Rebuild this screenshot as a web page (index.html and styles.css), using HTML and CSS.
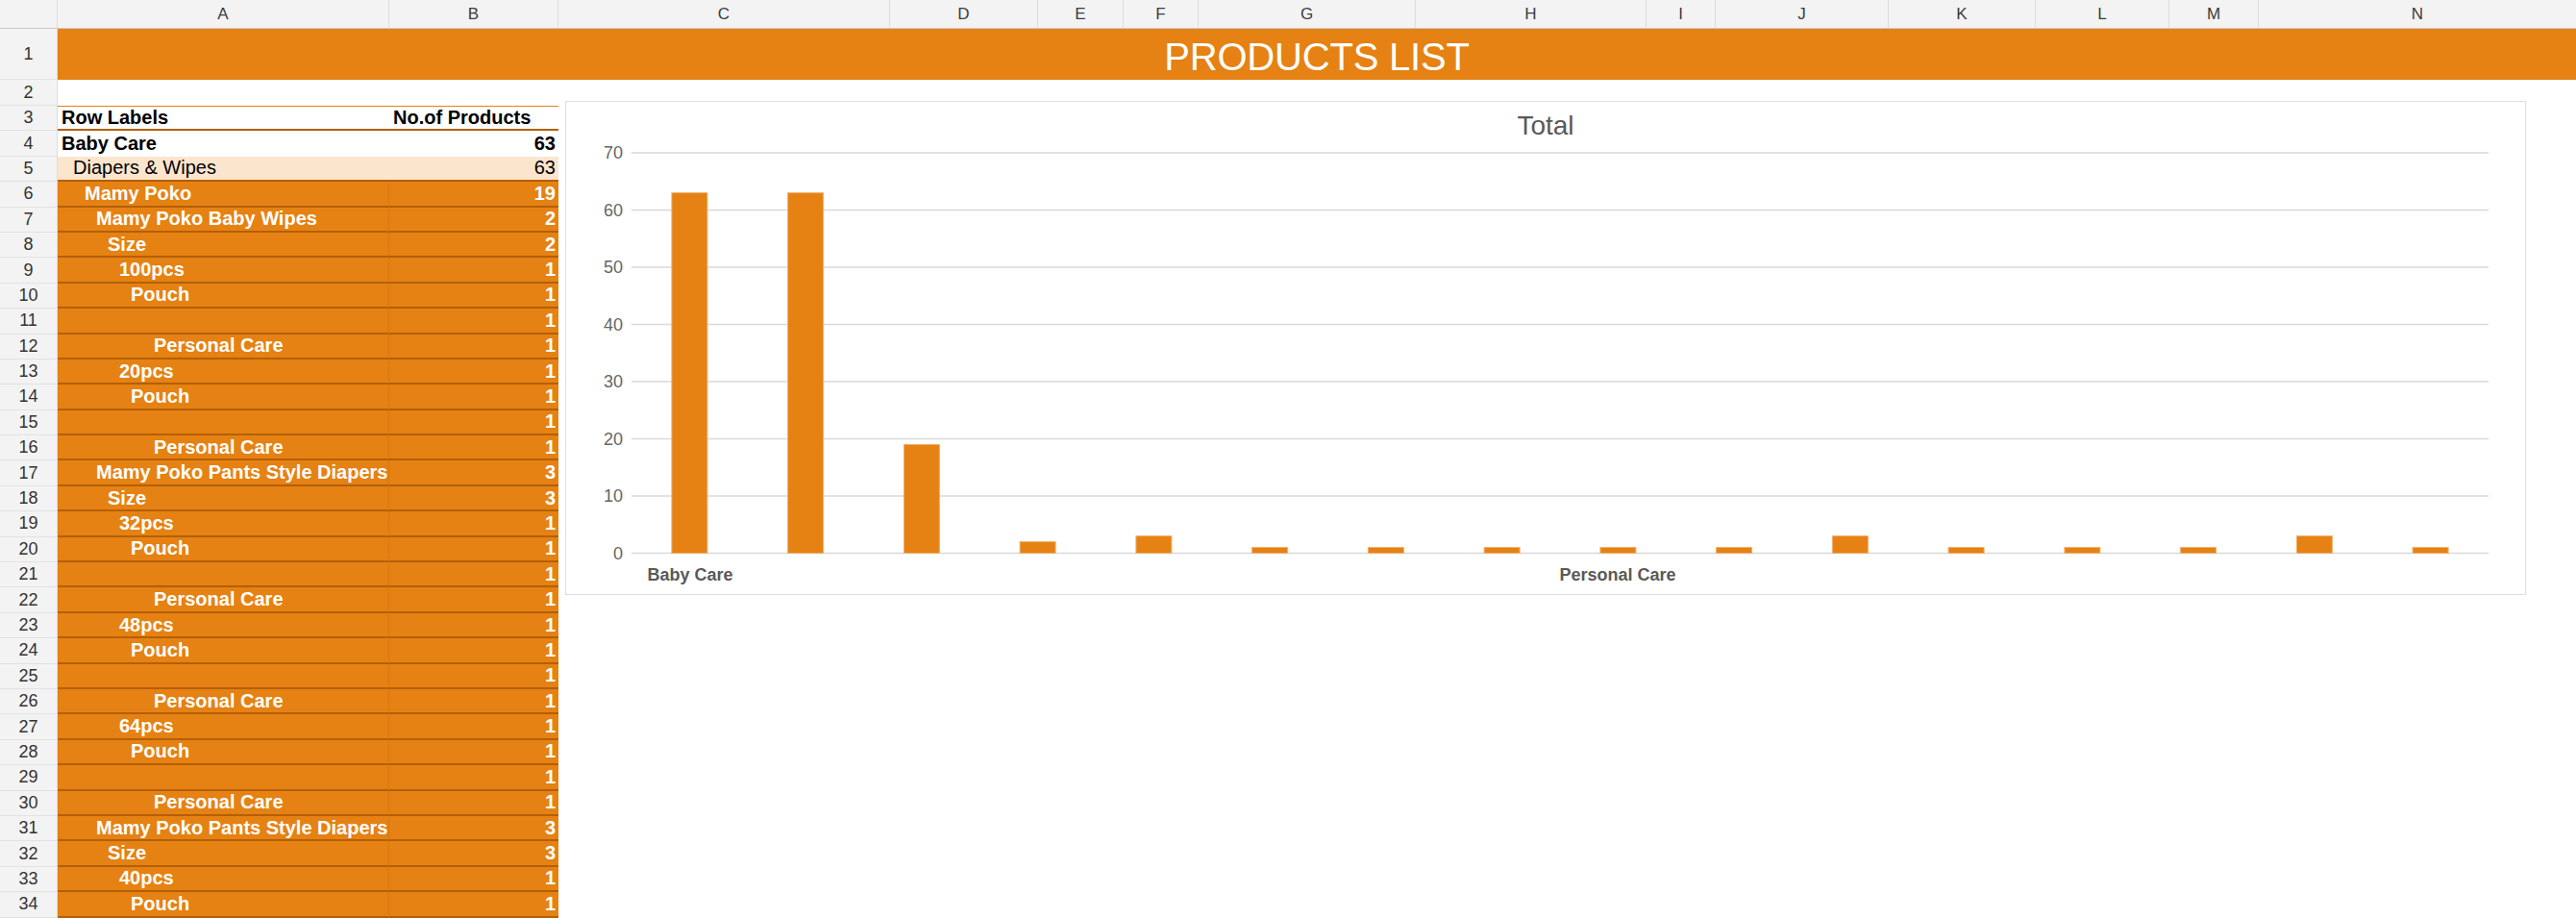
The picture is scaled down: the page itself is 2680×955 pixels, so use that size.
FILE: index.html
```html
<!DOCTYPE html>
<html>
<head>
<meta charset="utf-8">
<link rel="stylesheet" href="styles.css">
</head>
<body>
<div class="sheet">
  <div class="corner"></div>
  <div class="colhead">A</div><div class="colhead">B</div><div class="colhead">C</div><div class="colhead">D</div><div class="colhead">E</div><div class="colhead">F</div><div class="colhead">G</div><div class="colhead">H</div><div class="colhead">I</div><div class="colhead">J</div><div class="colhead">K</div><div class="colhead">L</div><div class="colhead">M</div><div class="colhead last">N</div>

  <div class="rowhead">1</div><div class="title">PRODUCTS LIST</div>
  <div class="rowhead">2</div>

  <div class="rowhead">3</div><div class="cell hdr lab">Row Labels</div><div class="cell hdr">No.of Products</div>
  <div class="rowhead">4</div><div class="cell top l0">Baby Care</div><div class="cell top num">63</div>
  <div class="rowhead">5</div><div class="cell sub l1">Diapers &amp; Wipes</div><div class="cell sub num">63</div>
  <div class="rowhead">6</div><div class="cell item l2">Mamy Poko</div><div class="cell item num">19</div>
  <div class="rowhead">7</div><div class="cell item l3">Mamy Poko Baby Wipes</div><div class="cell item num">2</div>
  <div class="rowhead">8</div><div class="cell item l4">Size</div><div class="cell item num">2</div>
  <div class="rowhead">9</div><div class="cell item l5">100pcs</div><div class="cell item num">1</div>
  <div class="rowhead">10</div><div class="cell item l6">Pouch</div><div class="cell item num">1</div>
  <div class="rowhead">11</div><div class="cell item l7"></div><div class="cell item num">1</div>
  <div class="rowhead">12</div><div class="cell item l8">Personal Care</div><div class="cell item num">1</div>
  <div class="rowhead">13</div><div class="cell item l5">20pcs</div><div class="cell item num">1</div>
  <div class="rowhead">14</div><div class="cell item l6">Pouch</div><div class="cell item num">1</div>
  <div class="rowhead">15</div><div class="cell item l7"></div><div class="cell item num">1</div>
  <div class="rowhead">16</div><div class="cell item l8">Personal Care</div><div class="cell item num">1</div>
  <div class="rowhead">17</div><div class="cell item l3">Mamy Poko Pants Style Diapers</div><div class="cell item num">3</div>
  <div class="rowhead">18</div><div class="cell item l4">Size</div><div class="cell item num">3</div>
  <div class="rowhead">19</div><div class="cell item l5">32pcs</div><div class="cell item num">1</div>
  <div class="rowhead">20</div><div class="cell item l6">Pouch</div><div class="cell item num">1</div>
  <div class="rowhead">21</div><div class="cell item l7"></div><div class="cell item num">1</div>
  <div class="rowhead">22</div><div class="cell item l8">Personal Care</div><div class="cell item num">1</div>
  <div class="rowhead">23</div><div class="cell item l5">48pcs</div><div class="cell item num">1</div>
  <div class="rowhead">24</div><div class="cell item l6">Pouch</div><div class="cell item num">1</div>
  <div class="rowhead">25</div><div class="cell item l7"></div><div class="cell item num">1</div>
  <div class="rowhead">26</div><div class="cell item l8">Personal Care</div><div class="cell item num">1</div>
  <div class="rowhead">27</div><div class="cell item l5">64pcs</div><div class="cell item num">1</div>
  <div class="rowhead">28</div><div class="cell item l6">Pouch</div><div class="cell item num">1</div>
  <div class="rowhead">29</div><div class="cell item l7"></div><div class="cell item num">1</div>
  <div class="rowhead">30</div><div class="cell item l8">Personal Care</div><div class="cell item num">1</div>
  <div class="rowhead">31</div><div class="cell item l3">Mamy Poko Pants Style Diapers</div><div class="cell item num">3</div>
  <div class="rowhead">32</div><div class="cell item l4">Size</div><div class="cell item num">3</div>
  <div class="rowhead">33</div><div class="cell item l5">40pcs</div><div class="cell item num">1</div>
  <div class="rowhead">34</div><div class="cell item l6">Pouch</div><div class="cell item num">1</div>

  <div class="chart">
    <svg class="chart-svg" viewBox="1 1 2038 512" width="2038" height="512">
      <text class="ctitle" x="1020" y="35" text-anchor="middle">Total</text>
      <g class="grid">
        <line x1="69" y1="54" x2="2001" y2="54"/>
        <line x1="69" y1="113.5" x2="2001" y2="113.5"/>
        <line x1="69" y1="173" x2="2001" y2="173"/>
        <line x1="69" y1="232.5" x2="2001" y2="232.5"/>
        <line x1="69" y1="292" x2="2001" y2="292"/>
        <line x1="69" y1="351.5" x2="2001" y2="351.5"/>
        <line x1="69" y1="411" x2="2001" y2="411"/>
        <line x1="69" y1="470.5" x2="2001" y2="470.5"/>
      </g>
      <g class="ylab">
        <text x="60" y="60">70</text>
        <text x="60" y="119.5">60</text>
        <text x="60" y="179">50</text>
        <text x="60" y="238.5">40</text>
        <text x="60" y="298">30</text>
        <text x="60" y="357.5">20</text>
        <text x="60" y="417">10</text>
        <text x="60" y="476.5">0</text>
      </g>
      <g class="bars">
        <rect x="110.9" y="95.6" width="37" height="374.9"/>
        <rect x="231.6" y="95.6" width="37" height="374.9"/>
        <rect x="352.4" y="357.4" width="37" height="113.1"/>
        <rect x="473.1" y="458.6" width="37" height="11.9"/>
        <rect x="593.9" y="452.6" width="37" height="17.9"/>
        <rect x="714.6" y="464.5" width="37" height="6"/>
        <rect x="835.4" y="464.5" width="37" height="6"/>
        <rect x="956.1" y="464.5" width="37" height="6"/>
        <rect x="1076.9" y="464.5" width="37" height="6"/>
        <rect x="1197.6" y="464.5" width="37" height="6"/>
        <rect x="1318.4" y="452.6" width="37" height="17.9"/>
        <rect x="1439.1" y="464.5" width="37" height="6"/>
        <rect x="1559.9" y="464.5" width="37" height="6"/>
        <rect x="1680.6" y="464.5" width="37" height="6"/>
        <rect x="1801.4" y="452.6" width="37" height="17.9"/>
        <rect x="1922.1" y="464.5" width="37" height="6"/>
      </g>
      <g class="xlab">
        <text x="130" y="499">Baby Care</text>
        <text x="1095" y="499">Personal Care</text>
      </g>
    </svg>
  </div>
</div>
</body>
</html>
```
FILE: styles.css
```css
html, body {
  margin: 0;
  padding: 0;
  background: #ffffff;
  overflow: hidden;
}
body {
  font-family: "Liberation Sans", Arial, sans-serif;
  width: 2680px;
  height: 955px;
}
.sheet {
  position: relative;
  display: grid;
  grid-template-columns: 60px 345px 176px 345px 154px 89px 78px 226px 240px 72px 180px 153px 139px 93px 330px;
  grid-template-rows: 30px 53px 27px repeat(32, 26.4px);
  width: 2680px;
}
.corner {
  background: #f3f3f3;
  border-right: 1px solid #dcdcdc;
  border-bottom: 1px solid #c8c8c8;
  box-sizing: border-box;
}
.colhead {
  background: #f3f3f3;
  border-right: 1px solid #dcdcdc;
  border-bottom: 1px solid #c8c8c8;
  box-sizing: border-box;
  color: #3c3c3c;
  font-size: 17px;
  display: flex;
  align-items: center;
  justify-content: center;
}
.colhead.last { border-right: none; }
.rowhead {
  grid-column: 1;
  background: #f3f3f3;
  border-right: 1px solid #dcdcdc;
  border-bottom: 1px solid #e2e2e2;
  box-sizing: border-box;
  color: #333333;
  font-size: 18px;
  display: flex;
  align-items: center;
  justify-content: center;
}
.title {
  grid-column: 2 / -1;
  background: #e58213;
  color: #ffffff;
  font-size: 40px;
  display: flex;
  align-items: center;
  justify-content: center;
  padding-top: 6px;
  box-sizing: border-box;
  letter-spacing: -0.2px;
}
.cell {
  box-sizing: border-box;
  font-size: 20px;
  white-space: nowrap;
  overflow: hidden;
  display: flex;
  align-items: center;
  padding: 0 3px 0 4px;
}
.cell.num { justify-content: flex-end; }
.hdr {
  font-weight: bold;
  color: #000000;
  border-top: 1.5px solid #e58213;
  border-bottom: 2.5px solid #b45f06;
  padding-left: 4px;
}
.top {
  font-weight: bold;
  color: #000000;
  background: #ffffff;
}
.sub {
  color: #000000;
  background: #fce5cd;
  border-bottom: 2.5px solid #b45f06;
}
.item {
  font-weight: bold;
  color: #ffffff;
  background: #e58213;
  border-bottom: 2.5px solid #b45f06;
}
.item.l2, .item.l3, .item.l4, .item.l5, .item.l6, .item.l7, .item.l8 {
  border-right: 1px solid #d8770f;
}
.l0 { padding-left: 4px; }
.l1 { padding-left: 16px; }
.l2 { padding-left: 28px; }
.l3 { padding-left: 40px; }
.l4 { padding-left: 52px; }
.l5 { padding-left: 64px; }
.l6 { padding-left: 76px; }
.l7 { padding-left: 88px; }
.l8 { padding-left: 100px; }

.chart {
  position: absolute;
  left: 588px;
  top: 105px;
  width: 2040px;
  height: 514px;
  box-sizing: border-box;
  border: 1px solid #dedede;
  background: #ffffff;
}
.chart-svg {
  display: block;
  font-family: "Liberation Sans", Arial, sans-serif;
}
.ctitle {
  font-size: 28px;
  fill: #595959;
}
.grid line {
  stroke: #d9d9d9;
  stroke-width: 1.5;
}
.ylab text {
  font-size: 18px;
  fill: #666666;
  text-anchor: end;
}
.bars rect {
  fill: #e58213;
  stroke: #f0b070;
  stroke-width: 1;
}
.xlab text {
  font-size: 18px;
  font-weight: bold;
  fill: #595959;
  text-anchor: middle;
}
```
